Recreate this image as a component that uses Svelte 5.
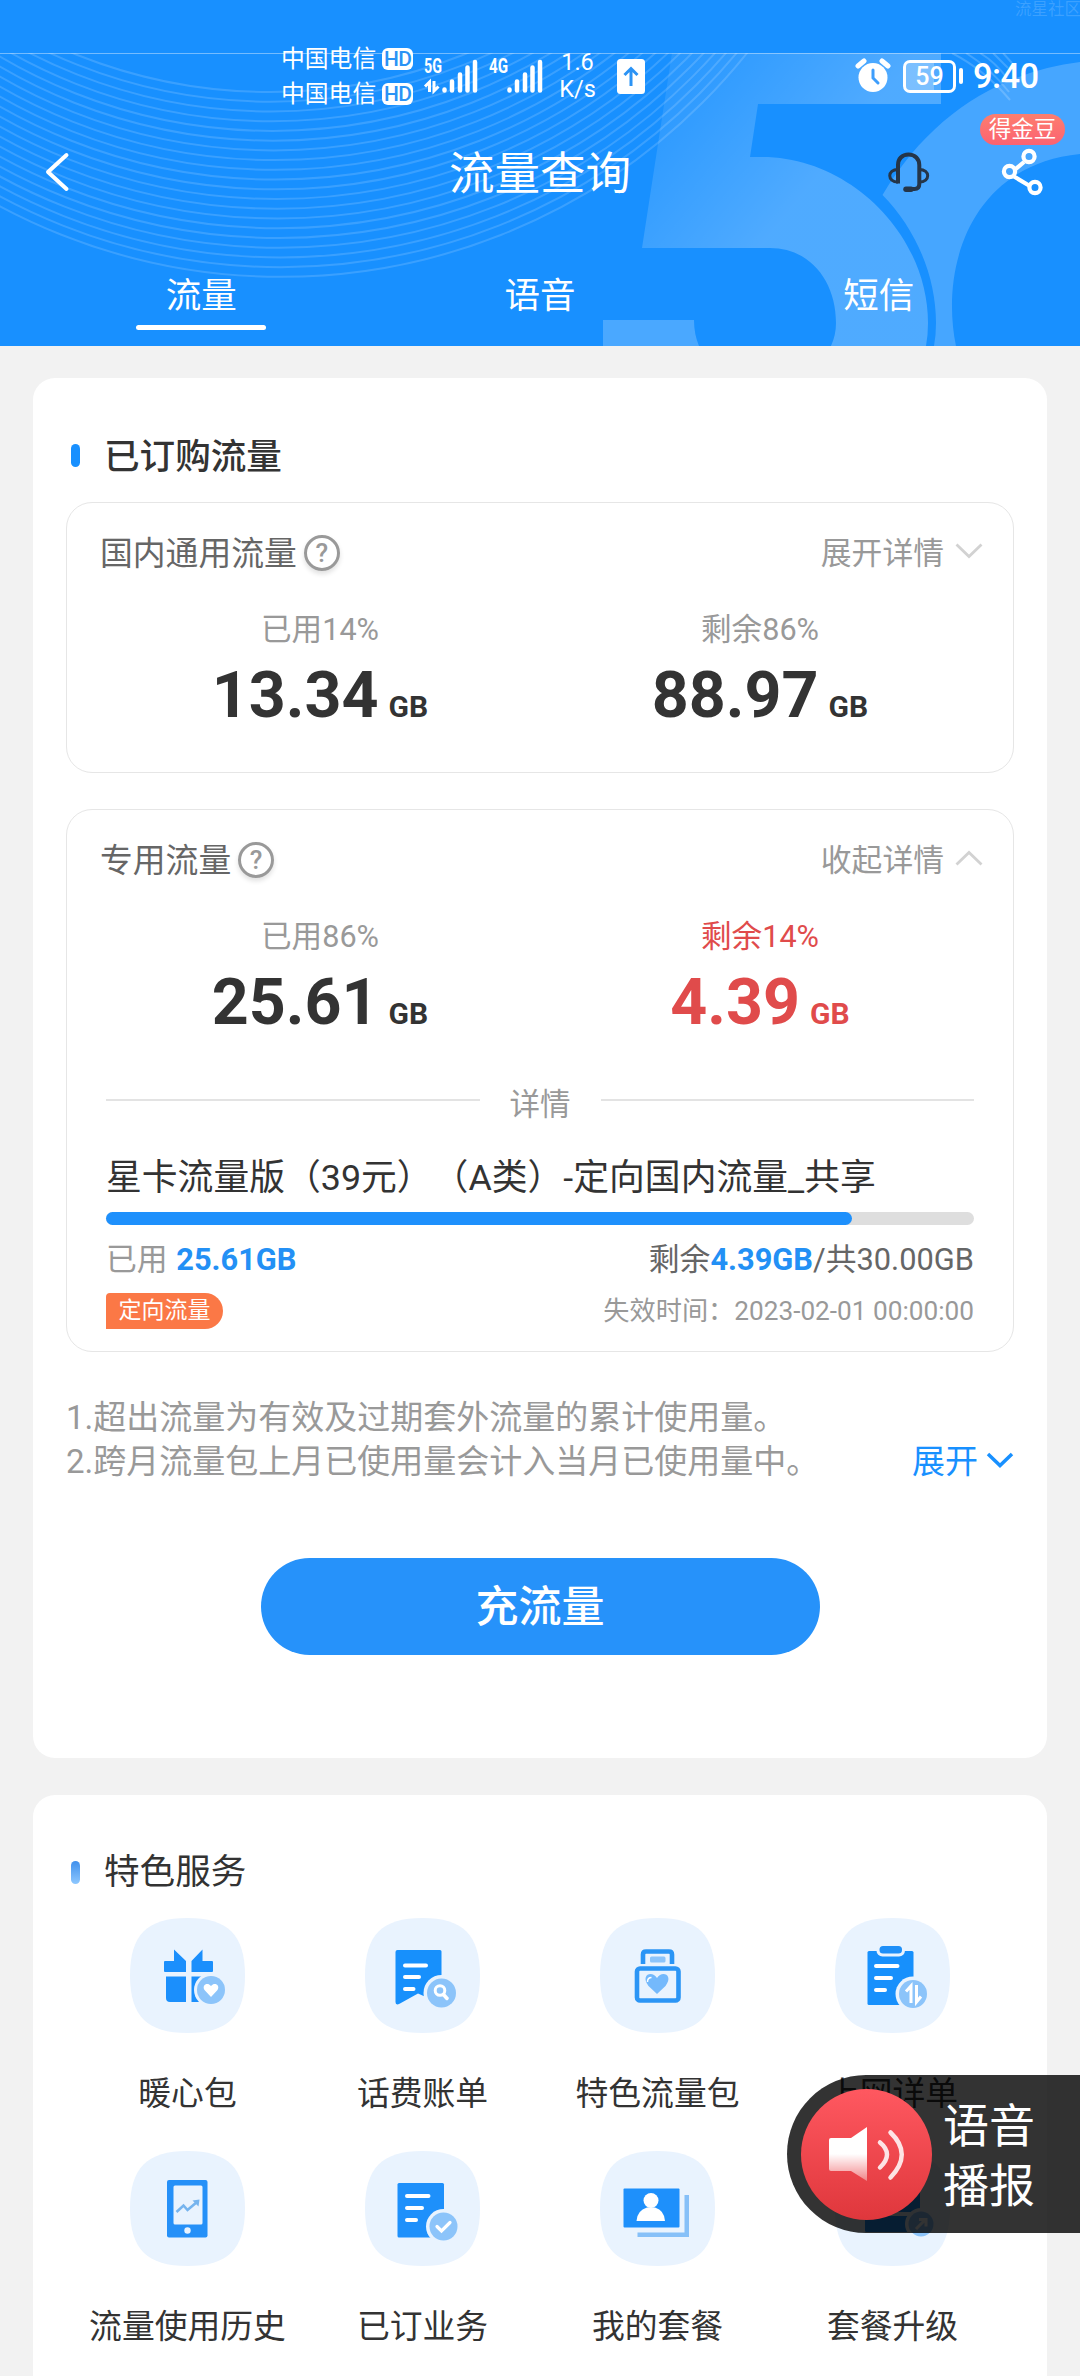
<script lang="ts">
  const tabs = ['流量', '语音', '短信'];
  let activeTab = 0;

  const rings = Array.from({ length: 20 }, (_, i) => {
    const r = 520 + 4 * i;
    return { r, cx: 270 + 0.6 * i, cy: 92 + 9.73 * i - r };
  });

  const packages = [
    {
      name: '国内通用流量',
      toggle: '展开详情',
      open: false,
      used: { label: '已用14%', value: '13.34' },
      left: { label: '剩余86%', value: '88.97' },
      low: false
    },
    {
      name: '专用流量',
      toggle: '收起详情',
      open: true,
      used: { label: '已用86%', value: '25.61' },
      left: { label: '剩余14%', value: '4.39' },
      low: true
    }
  ];

  const percent = 86;

  const services = [
    { icon: 'gift', label: '暖心包' },
    { icon: 'bill', label: '话费账单' },
    { icon: 'bag', label: '特色流量包' },
    { icon: 'clipboard', label: '上网详单' },
    { icon: 'phone', label: '流量使用历史' },
    { icon: 'order', label: '已订业务' },
    { icon: 'card', label: '我的套餐' },
    { icon: 'upgrade', label: '套餐升级' }
  ];
</script>

<div class="page">
  <header>
    <svg class="header-bg" width="1080" height="346" viewBox="0 0 1080 346">
      <defs>
        <linearGradient id="five" gradientUnits="userSpaceOnUse" x1="655" y1="100" x2="790" y2="210">
          <stop offset="0" stop-color="#fff" stop-opacity="0.08" />
          <stop offset="1" stop-color="#fff" stop-opacity="0.24" />
        </linearGradient>
        <clipPath id="below"><rect y="53" width="1080" height="293" /></clipPath>
      </defs>
      <g clip-path="url(#below)">
        {#each rings as ring}
          <circle cx={ring.cx} cy={ring.cy} r={ring.r} fill="none" stroke="#fff" stroke-opacity="0.15" stroke-width="2" />
        {/each}
        <path fill="url(#five)" d="M672 53H941V104H758L750 157H762C850 157 928 235 928 323Q928 335 926 346H831Q836 335 836 323C836 281 810 248 770 248H642Z" />
        <path fill="#fff" fill-opacity="0.22" d="M603 320H694Q694 334 699 346H603Z" />
        <path fill="#fff" fill-opacity="0.2" d="M1080 62C1000 72 930 115 882.500 195C915 228 936 275 936 323Q936 335 934 346H956C940 268 970 165 1080 154Z" />
        <path fill="none" stroke="#fff" stroke-opacity="0.18" stroke-width="2" d="M952 53Q985 70 1010 100M966 53Q990 68 1009 92M980 53Q995 62 1007 78M993 53L1008 68M1003 53L1012 63" />
      </g>
      <rect y="53" width="1080" height="1" fill="#fff" fill-opacity="0.4" />
    </svg>
    <div class="watermark">流星社区</div>

    <div class="status">
      <div class="carriers">
        <div class="carrier">中国电信 <span class="hd">HD</span></div>
        <div class="carrier">中国电信 <span class="hd">HD</span></div>
      </div>
      <svg class="signal" width="54" height="36" viewBox="0 0 54 36">
        <text x="0" y="15" textLength="18" lengthAdjust="spacingAndGlyphs">5G</text>
        <path d="M20.500 32.500v-1M28 32.500v-9M36 32.500v-16M43.500 32.500v-23M51 32.500V4" stroke="#fff" stroke-width="4.500" stroke-linecap="round" />
        <path d="M1 28.500L5.500 24V34M10 23V33L14.500 28.500" fill="none" stroke="#fff" stroke-width="3" />
      </svg>
      <svg class="signal" width="54" height="36" viewBox="0 0 54 36">
        <text x="0" y="15" textLength="19" lengthAdjust="spacingAndGlyphs">4G</text>
        <path d="M20.500 32.500v-1M28 32.500v-9M36 32.500v-16M43.500 32.500v-23M51 32.500V4" stroke="#fff" stroke-width="4.500" stroke-linecap="round" />
      </svg>
      <div class="speed"><span>1.6</span><span>K/s</span></div>
      <svg class="upload" width="28" height="35" viewBox="0 0 28 35">
        <rect width="28" height="35" rx="3.500" fill="#fff" />
        <path d="M14 27V10M7.500 16L14 9.500L20.500 16" fill="none" stroke="#2b93f5" stroke-width="3" />
      </svg>
      <svg class="alarm" width="36" height="36" viewBox="0 0 36 36">
        <circle cx="18" cy="19.500" r="14.500" fill="#fff" />
        <path d="M3 8L9 3M33 8L27 3" stroke="#fff" stroke-width="5" stroke-linecap="round" />
        <path d="M18 12V20L23 25" fill="none" stroke="#3e9efc" stroke-width="3" stroke-linecap="round" />
      </svg>
      <div class="battery"><span>59</span></div>
      <div class="tip"></div>
      <div class="time">9:40</div>
    </div>

    <nav>
      <svg width="26" height="40" viewBox="0 0 26 40">
        <path d="M21.500 3L3 20L21.500 37" fill="none" stroke="#fff" stroke-width="4" stroke-linejoin="round" stroke-linecap="round" />
      </svg>
      <h1>流量查询</h1>
      <div class="actions">
        <svg width="44" height="42" viewBox="0 0 44 42" fill="none" stroke="#253548" stroke-width="4">
          <path d="M12 32.500V14C12 8 16 3.500 22.500 3.500S33.300 8 33.300 14V33Q33.300 38 28.500 38H20" stroke-linejoin="round" />
          <path d="M12 18.500C1 18.500 1 31 12 31M33.300 18.500C44.500 18.500 44.500 31 33.300 31" stroke-width="3" />
          <path d="M20 38.200H25" stroke-width="5.500" stroke-linecap="round" />
        </svg>
        <div class="share">
          <svg width="44" height="48" viewBox="0 0 44 48" fill="none" stroke="#fff" stroke-width="4.200">
            <path d="M24 14L14.500 22M14 28.500L29 37.500" />
            <circle cx="29" cy="8.500" r="5.600" />
            <circle cx="9.500" cy="23.500" r="5.600" />
            <circle cx="35" cy="39.500" r="5.600" />
          </svg>
          <span class="badge">得金豆</span>
        </div>
      </div>
    </nav>

    <div class="tabs">
      {#each tabs as tab, i}
        <button class:active={i === activeTab} on:click={() => (activeTab = i)}>{tab}</button>
      {/each}
    </div>
  </header>

  <main>
    <section class="panel usage">
      <h2>已订购流量</h2>
      {#each packages as pkg}
        <div class="package">
          <div class="package-head">
            <span class="name">{pkg.name}</span>
            <span class="help">?</span>
            <span class="toggle">{pkg.toggle}</span>
            <svg class="chevron" class:up={pkg.open} width="28" height="16" viewBox="0 0 28 16">
              <path d="M1.500 1.500L14 13.500L26.500 1.500" fill="none" stroke="#d2d2d2" stroke-width="2.800" />
            </svg>
          </div>
          <div class="amounts">
            <div class="amount">
              <span class="label">{pkg.used.label}</span>
              <span class="value">{pkg.used.value}<small>GB</small></span>
            </div>
            <div class="amount" class:low={pkg.low}>
              <span class="label">{pkg.left.label}</span>
              <span class="value">{pkg.left.value}<small>GB</small></span>
            </div>
          </div>
          {#if pkg.open}
            <div class="detail">
              <div class="divider">详情</div>
              <div class="plan">星卡流量版（39元）（A类）-定向国内流量_共享</div>
              <div class="progress"><div class="fill" style="width: {percent}%"></div></div>
              <div class="row">
                <span class="used">已用 <b>25.61GB</b></span>
                <span>剩余<b>4.39GB</b>/共30.00GB</span>
              </div>
              <div class="row expire">
                <span class="tag">定向流量</span>
                <span>失效时间：2023-02-01 00:00:00</span>
              </div>
            </div>
          {/if}
        </div>
      {/each}

      <div class="notes">
        <div>
          <p>1.超出流量为有效及过期套外流量的累计使用量。</p>
          <p>2.跨月流量包上月已使用量会计入当月已使用量中。</p>
        </div>
        <span class="more">
          展开
          <svg width="28" height="18" viewBox="0 0 28 18">
            <path d="M2 2L14 13.500L26 2" fill="none" stroke="#1890ff" stroke-width="3.500" />
          </svg>
        </span>
      </div>
      <button class="recharge">充流量</button>
    </section>

    <section class="panel services">
      <h2 class="light">特色服务</h2>
      <div class="grid">
        {#each services as service}
          <div class="service">
            <svg class="icon" width="115" height="115" viewBox="0 0 115 115">
              <path fill="#e9f3fe" d="M57.500 0C98 0 115 17 115 57.500S98 115 57.500 115S0 98 0 57.500S17 0 57.500 0Z" />
              {#if service.icon === 'gift'}
                <g fill="#1b8ffc">
                  <path d="M35 43H44V31.500L56 43V54H35Q34 54 34 53V44Q34 43 35 43ZM61.500 54V43L72.500 31.500V43H82Q83 43 83 44V53Q83 54 82 54Z" />
                  <path d="M36 58.500H56V84H40Q36 84 36 80ZM61.500 58.500H81V84H61.500Z" />
                </g>
                <circle cx="81" cy="72" r="17" fill="#e9f3fe" />
                <circle cx="81" cy="72" r="14" fill="#8cc4fa" />
                <path d="M81 79L74.500 72C71.500 67 77.500 63.500 81 68C84.500 63.500 90.500 67 87.500 72Z" fill="#fff" />
              {:else if service.icon === 'bill'}
                <path d="M32.500 32H75Q76.500 32 76.500 33.500V86L53 75.500L35 85.500Q30.500 88 30.500 84V34Q30.500 32 32.500 32Z" fill="#1790fc" />
                <path d="M40 47.500H61M40 59H54M40 71H48.500" stroke="#fff" stroke-width="4" stroke-linecap="round" />
                <circle cx="76.500" cy="75" r="18" fill="#e9f3fe" />
                <circle cx="76.500" cy="75" r="14.500" fill="#8cc4fa" />
                <path d="M78.500 76.500L82 80.500" stroke="#fff" stroke-width="3.500" stroke-linecap="round" />
                <circle cx="75" cy="72.500" r="4.800" fill="none" stroke="#fff" stroke-width="3" />
              {:else if service.icon === 'bag'}
                <rect x="37" y="50.500" width="41.500" height="32" rx="3" fill="none" stroke="#2b95f5" stroke-width="4.600" />
                <path d="M43 46V36.500Q43 33.500 46 33.500H69Q72 33.500 72 36.500V46" fill="none" stroke="#2b95f5" stroke-width="4.600" />
                <rect x="50" y="38.500" width="15.500" height="6" rx="1.500" fill="#8cc4fa" />
                <path d="M57 76L48.500 68C40 57 52 52 57 60C62 52 74 57 65.500 68Z" fill="#74b9fc" />
                <path d="M47.500 64Q47.500 59.500 51.500 59.500" fill="none" stroke="#fff" stroke-width="1.500" />
              {:else if service.icon === 'clipboard'}
                <rect x="32.500" y="33" width="46" height="54" rx="1.500" fill="#1790fc" />
                <rect x="41.500" y="25.500" width="28.500" height="13" rx="6" fill="#e9f3fe" />
                <rect x="44.500" y="28" width="22.500" height="7.500" rx="3.500" fill="#1e8ff8" />
                <path d="M41 48H62.500M41 60H56M41 72H50" stroke="#fff" stroke-width="4" stroke-linecap="round" />
                <circle cx="78" cy="76" r="17.500" fill="#e9f3fe" />
                <circle cx="78" cy="76" r="14" fill="#8cc4fa" />
                <path d="M71 73.500L76 68V85M81.500 67V84L86 78.500" fill="none" stroke="#fff" stroke-width="3" />
              {:else if service.icon === 'phone'}
                <rect x="37" y="29" width="40.500" height="57.500" rx="2" fill="#2590f8" />
                <rect x="43.500" y="34.500" width="29" height="39" rx="1.500" fill="#e9f3fe" />
                <circle cx="57.500" cy="79.500" r="3.200" fill="#e9f3fe" />
                <path d="M46.500 61L53.500 54.500L57.500 59L67 51" fill="none" stroke="#76b4ee" stroke-width="2.600" />
                <path d="M62.500 49.500L69.500 48.500L68.500 55.500Z" fill="#76b4ee" />
              {:else if service.icon === 'order'}
                <rect x="32.500" y="32" width="46.500" height="54.500" rx="1.500" fill="#1e90fb" />
                <path d="M42 45H63.500M42 57H57M42 69H51" stroke="#fff" stroke-width="4" stroke-linecap="round" />
                <circle cx="78.500" cy="75.500" r="17.500" fill="#e9f3fe" />
                <circle cx="78.500" cy="75.500" r="14" fill="#8cc4fa" />
                <path d="M72 75.500L76.500 80L85 71.500" fill="none" stroke="#fff" stroke-width="3.200" stroke-linecap="round" />
              {:else if service.icon === 'card'}
                <path d="M84.500 44H89V86H37.500V81.500H84.500Z" fill="#86c0f8" />
                <rect x="23.500" y="37.500" width="56" height="39" rx="1" fill="#1e90fb" />
                <circle cx="51" cy="49.500" r="7.500" fill="#fff" />
                <path d="M36.500 70Q37 59.500 47 56.500H55Q64.500 59.500 65 70Z" fill="#fff" />
              {:else}
                <rect x="30" y="34" width="55" height="27" rx="1.500" fill="#1e90fb" />
                <rect x="30" y="65" width="55" height="16" rx="1.500" fill="#1e90fb" />
                <circle cx="86" cy="73" r="16" fill="#e9f3fe" />
                <circle cx="86" cy="73" r="12.500" fill="#8cc4fa" />
                <path d="M81 78L90 69M84 68.500H91V75.500" fill="none" stroke="#fff" stroke-width="3" />
              {/if}
            </svg>
            <span>{service.label}</span>
          </div>
        {/each}
      </div>
    </section>
  </main>

  <div class="voice">
    <svg width="131" height="131" viewBox="0 0 131 131">
      <defs>
        <linearGradient id="red" x1="0" y1="0" x2="0" y2="1">
          <stop offset="0" stop-color="#ff5860" />
          <stop offset="1" stop-color="#df373c" />
        </linearGradient>
        <linearGradient id="horn" x1="0" y1="0" x2="0" y2="1">
          <stop offset="0.500" stop-color="#fff" />
          <stop offset="1" stop-color="#fff" stop-opacity="0.350" />
        </linearGradient>
      </defs>
      <circle cx="65.500" cy="65.500" r="65.500" fill="url(#red)" />
      <path d="M30 49H50L66 38V92L50 82H30Q28 82 28 80V51Q28 49 30 49Z" fill="url(#horn)" />
      <path d="M79 53.500Q93 65 79 78.500M89.500 43.500Q112 65 89.500 88.500" fill="none" stroke="#fff" stroke-opacity="0.850" stroke-width="4.500" stroke-linecap="round" />
    </svg>
    <span>语音<br />播报</span>
  </div>
</div>

<style>
  :global(body) {
    background: #f2f2f2;
  }

  .page {
    position: relative;
    width: 1080px;
    height: 2376px;
    overflow: hidden;
    background: #f2f2f2;
    font-family: Roboto, 'Noto Sans CJK SC', sans-serif;
    color: #333;
    text-spacing-trim: space-all;
  }

  h1, h2, p {
    margin: 0;
    font-weight: 400;
  }

  button {
    border: none;
    padding: 0;
    font-family: inherit;
    color: #fff;
  }

  svg {
    display: block;
    flex-shrink: 0;
  }

  header {
    position: relative;
    height: 346px;
    background: #1890ff;
    color: #fff;
  }

  .header-bg {
    position: absolute;
    top: 0;
    left: 0;
  }

  .watermark {
    position: absolute;
    top: -3px;
    left: 1015px;
    font-size: 16.5px;
    line-height: 26px;
    white-space: nowrap;
    color: rgba(255, 255, 255, 0.16);
  }

  .status {
    position: relative;
    display: flex;
    align-items: center;
    height: 80px;
    padding: 36px 0 0 281px;
  }

  .carriers {
    padding-top: 2px;
  }

  .carrier {
    display: flex;
    align-items: center;
    width: 143px;
    height: 35px;
    gap: 6px;
    font-size: 23.8px;
    line-height: 35px;
    white-space: nowrap;
  }

  .hd {
    width: 31px;
    height: 22px;
    margin-bottom: 2px;
    border-radius: 6px;
    background: #fff;
    color: #2b93f5;
    font-size: 21px;
    font-weight: 500;
    letter-spacing: -0.5px;
    line-height: 23px;
    text-align: center;
  }

  .signal {
    margin-right: 11px;
    overflow: visible;
  }

  .signal text {
    fill: #fff;
    font-size: 21px;
    font-weight: 700;
  }

  .speed {
    display: flex;
    flex-direction: column;
    align-items: center;
    width: 41px;
    margin-left: 3px;
    font-size: 23.5px;
    line-height: 27px;
  }

  .upload {
    margin-left: 19px;
  }

  .alarm {
    margin-left: 210px;
  }

  .battery {
    display: flex;
    align-items: center;
    justify-content: center;
    box-sizing: border-box;
    width: 53px;
    height: 33px;
    margin-left: 12px;
    border: 3px solid #fff;
    border-radius: 7px;
    font-size: 25px;
    font-weight: 500;
    background: linear-gradient(90deg, rgba(255, 255, 255, 0.25) 60%, transparent 60%);
  }

  .tip {
    width: 4px;
    height: 16px;
    margin-left: 3px;
    border-radius: 2px;
    background: #fff;
  }

  .time {
    margin-left: 10px;
    font-size: 34.5px;
    font-weight: 500;
    letter-spacing: -0.6px;
  }

  nav {
    position: relative;
    display: grid;
    grid-template-columns: 270px 1fr 270px;
    align-items: center;
    height: 112px;
  }

  nav > svg {
    margin-left: 45px;
  }

  h1 {
    padding-top: 5px;
    font-size: 45.5px;
    line-height: 60px;
    text-align: center;
  }

  .actions {
    display: flex;
    align-items: center;
    padding-left: 76px;
    gap: 70px;
  }

  .share {
    position: relative;
  }

  .badge {
    position: absolute;
    top: -34px;
    left: -20px;
    width: 85px;
    height: 31px;
    border-radius: 16px;
    background: linear-gradient(180deg, #fd7e6e, #fb6272);
    font-size: 22.5px;
    line-height: 31px;
    text-align: center;
  }

  .tabs {
    position: relative;
    display: grid;
    grid-template-columns: repeat(3, 1fr);
    height: 118px;
    padding: 0 32px;
  }

  .tabs button {
    display: flex;
    flex-direction: column;
    align-items: center;
    padding-top: 41px;
    background: none;
    font-size: 35.5px;
    line-height: 54px;
  }

  .tabs .active::after {
    content: '';
    width: 130px;
    height: 5px;
    margin-top: 2px;
    border-radius: 3px;
    background: #fff;
  }

  main {
    display: flex;
    flex-direction: column;
    gap: 37px;
    padding: 32px 33px 0;
  }

  .panel {
    box-sizing: border-box;
    border-radius: 22px;
    background: #fff;
  }

  .usage {
    height: 1380px;
    padding: 55px 33px 0;
  }

  h2 {
    display: flex;
    align-items: center;
    height: 48px;
    padding-left: 5px;
    gap: 24px;
    font-size: 35.6px;
    font-weight: 500;
    line-height: 48px;
  }

  h2::before {
    content: '';
    width: 9px;
    height: 23px;
    margin-bottom: 4px;
    border-radius: 5px;
    background: #1890ff;
  }

  h2.light {
    font-weight: 400;
  }

  h2.light::before {
    margin-bottom: 0;
    background: linear-gradient(180deg, #3f90ec, #8ec8ff);
  }

  .package {
    box-sizing: border-box;
    width: 948px;
    min-height: 271px;
    margin-top: 21px;
    padding: 0 33px;
    border: 1.5px solid #e6e6e6;
    border-radius: 26px;
  }

  .package + .package {
    height: 543px;
    margin-top: 36px;
  }

  .package-head {
    display: flex;
    align-items: center;
    height: 48px;
    padding-top: 27px;
  }

  .name {
    font-size: 32.8px;
    line-height: 48px;
    color: #666;
  }

  .help {
    box-sizing: border-box;
    width: 36px;
    height: 36px;
    margin: 0 0 2px 7px;
    border: 3px solid #999;
    border-radius: 50%;
    box-shadow: 0 3px 5px rgba(0, 0, 0, 0.12);
    font-size: 26px;
    font-weight: 500;
    line-height: 31px;
    text-align: center;
    color: #999;
  }

  .toggle {
    margin-left: auto;
    font-size: 30.8px;
    line-height: 48px;
    color: #999;
  }

  .chevron {
    margin: 0 -3px 6px 11px;
  }

  .up {
    transform: rotate(180deg);
  }

  .amounts {
    display: grid;
    grid-template-columns: 1fr 1fr;
    padding-top: 30px;
  }

  .amount {
    display: flex;
    flex-direction: column;
    align-items: center;
  }

  .label {
    font-size: 30.6px;
    line-height: 44px;
    color: #999;
  }

  .value {
    margin-top: 5px;
    font-size: 64.5px;
    font-weight: 700;
    line-height: 76px;
  }

  small {
    margin-left: 10px;
    font-size: 30px;
  }

  .low,
  .low .label {
    color: #e04b4b;
  }

  .detail {
    padding: 27px 6px 0;
  }

  .divider {
    display: flex;
    align-items: center;
    height: 46px;
    gap: 30px;
    font-size: 30.5px;
    color: #999;
  }

  .divider::before,
  .divider::after {
    content: '';
    flex: 1;
    height: 2px;
    margin-bottom: 4px;
    background: #e3e3e3;
  }

  .plan {
    margin-top: 26px;
    font-size: 35.8px;
    line-height: 54px;
    white-space: nowrap;
  }

  .progress {
    height: 13px;
    margin-top: 7px;
    border-radius: 7px;
    background: #dedede;
  }

  .fill {
    height: 13px;
    border-radius: 7px;
    background: #1e90fc;
  }

  .row {
    display: flex;
    align-items: center;
    justify-content: space-between;
    height: 44px;
    margin-top: 13px;
    font-size: 30.8px;
    line-height: 44px;
    color: #666;
  }

  .row b {
    color: #2390f5;
  }

  .used {
    color: #999;
  }

  .used b {
    margin-left: 1px;
  }

  .expire {
    height: 36px;
    margin-top: 11px;
    font-size: 26.2px;
    color: #999;
  }

  .tag {
    width: 117px;
    height: 36px;
    border-radius: 4px 18px 18px 0;
    background: #fb7846;
    color: #fff;
    font-size: 23px;
    line-height: 36px;
    text-align: center;
  }

  .notes {
    display: flex;
    align-items: flex-end;
    justify-content: space-between;
    margin-top: 44px;
    font-size: 33px;
    line-height: 44px;
    color: #999;
    white-space: nowrap;
  }

  .more {
    display: flex;
    align-items: center;
    gap: 8px;
    color: #1890ff;
  }

  .more svg {
    margin-bottom: 2px;
  }

  .recharge {
    display: block;
    width: 559px;
    height: 97px;
    margin: 74px auto 0;
    border-radius: 49px;
    background: #2692fa;
    font-size: 43px;
    font-weight: 500;
    line-height: 99px;
  }

  .services {
    height: 620px;
    padding: 53px 37px 0;
  }

  .services h2 {
    padding-left: 1px;
  }

  .grid {
    display: grid;
    grid-template-columns: repeat(4, 1fr);
    grid-auto-rows: 233px;
    padding-top: 22px;
  }

  .service {
    display: flex;
    flex-direction: column;
    align-items: center;
    gap: 37px;
    font-size: 32.8px;
    line-height: 48px;
    white-space: nowrap;
  }

  .voice {
    position: absolute;
    top: 2075px;
    right: 0;
    box-sizing: border-box;
    display: flex;
    align-items: center;
    width: 293px;
    height: 158px;
    padding-left: 14px;
    gap: 11px;
    border-radius: 79px 0 0 79px;
    background: rgba(0, 0, 0, 0.8);
    color: #fff;
    font-size: 46px;
    line-height: 60px;
  }

  .voice span {
    padding-top: 4px;
  }
</style>
